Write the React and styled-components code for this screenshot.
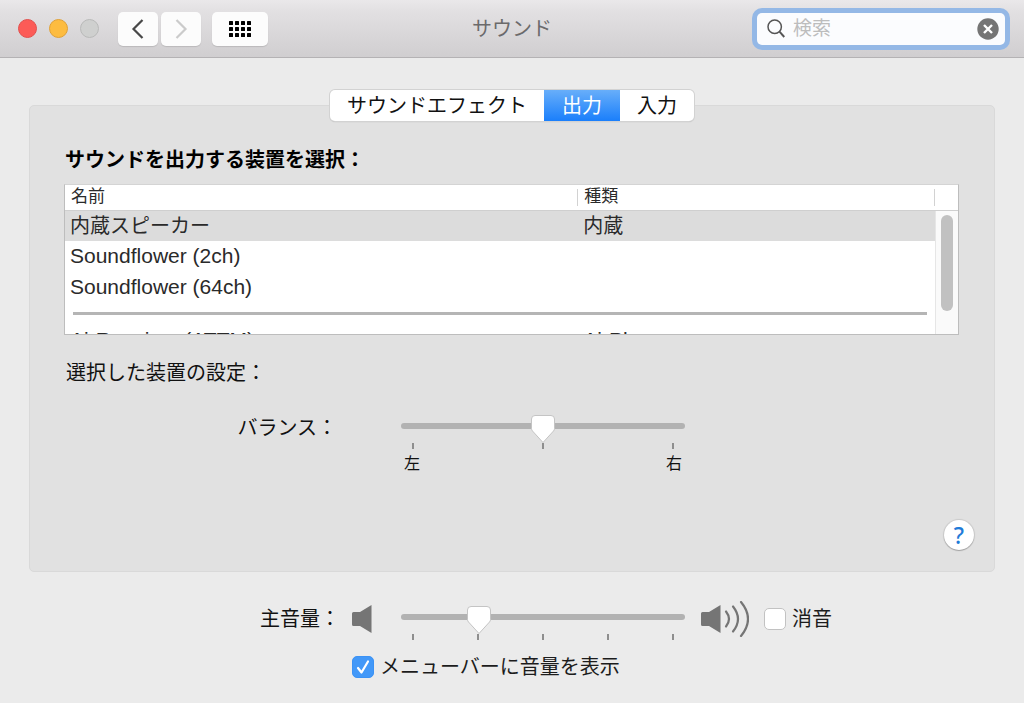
import React, { useState } from "react";
import styled, { createGlobalStyle } from "styled-components";

const GlobalStyle = createGlobalStyle`
  * {
    box-sizing: border-box;
  }
  body {
    margin: 0;
    background: #ebebeb;
    color: #111;
    font-family: "Liberation Sans", "Noto Sans CJK JP", sans-serif;
    font-size: 20px;
    line-height: 30px;
  }
  button,
  input {
    font: inherit;
    color: inherit;
    margin: 0;
    padding: 0;
    border: 0;
    outline: none;
  }
`;

const StyledTitleBar = styled.header`
  display: grid;
  grid-template-columns: 1fr auto 1fr;
  align-items: center;
  height: 58px;
  padding: 0 18px;
  background: linear-gradient(#eae8ea, #e2e0e2 20%, #d0ced0);
  border-bottom: 1px solid #b4b2b4;
`;
const StyledTitle = styled.h1`
  margin: 0;
  font-size: 20px;
  font-weight: 400;
  color: #6b6a6b;
`;
const StyledControls = styled.div`
  display: flex;
  align-items: center;
  gap: 11px;
`;
const StyledLights = styled.div`
  display: flex;
  gap: 12px;
  margin-right: 8px;
`;
const StyledLight = styled.button`
  width: 19px;
  height: 19px;
  border-radius: 50%;
  background: ${(props) => props.$color};
  border: 1px solid ${(props) => props.$edge};
`;
const StyledNav = styled.div`
  display: flex;
  gap: 3px;
`;
const StyledToolButton = styled.button`
  display: flex;
  align-items: center;
  justify-content: center;
  width: ${(props) => (props.$wide ? 56 : 40)}px;
  height: 34px;
  border-radius: 5px;
  background: #fcfcfc;
  box-shadow: 0 1px 1px rgba(0, 0, 0, 0.12);
`;
const StyledSearch = styled.label`
  justify-self: end;
  display: flex;
  align-items: center;
  gap: 8px;
  width: 248px;
  height: 32px;
  margin-right: 1px;
  padding: 0 6px 0 10px;
  border-radius: 5px;
  background: #fbfcfe;
  box-shadow: 0 0 0 5px #94b8e6;
`;
const StyledSearchInput = styled.input`
  flex: 1;
  min-width: 0;
  background: none;
  font-size: 19px;

  &::placeholder {
    color: #bdbdbd;
    opacity: 1;
  }
`;
const StyledClear = styled.button`
  display: flex;
  background: none;
`;

const StyledMain = styled.main`
  padding: 32px 29px 20px;
`;
const StyledTabs = styled.div`
  position: relative;
  display: flex;
  width: fit-content;
  margin: 0 auto -16px;
  border-radius: 5px;
  background: #fff;
  box-shadow: 0 0 0 1px #d2d2d2, 0 1px 1px rgba(0, 0, 0, 0.25);
`;
const StyledTab = styled.button`
  height: 31px;
  padding: 0 ${(props) => (props.$active ? 18 : 17)}px;
  line-height: 30px;
  border-radius: 5px;
  background: none;
  ${(props) =>
    props.$active &&
    "border-radius: 0; color: #fff; background: linear-gradient(#68aefa, #1a7ffb);"}
`;
const StyledPanel = styled.section`
  border: 1px solid #d9d9d9;
  border-radius: 5px;
  background: #e1e1e1;
  padding-bottom: 21px;
`;
const StyledDevices = styled.div`
  padding: 39px 35px 0 34px;
`;
const StyledHeading = styled.h2`
  margin: 0 0 9px;
  padding-left: 1px;
  font-size: 20px;
  font-weight: 700;
  color: #000;
`;
const StyledSubheading = styled.h3`
  margin: 23px 0 0;
  padding-left: 2px;
  font-size: 20px;
  font-weight: 400;
`;

const StyledTableBox = styled.div`
  display: grid;
  grid-template-columns: 1fr 23px;
  height: 151px;
  overflow: hidden;
  border: 1px solid #bdbdbd;
  border-top-color: #d4d4d4;
  background: #fff;
`;
const StyledTable = styled.table`
  width: 100%;
  border-collapse: collapse;
  table-layout: fixed;
  color: #2a2a2a;
`;
const StyledTh = styled.th`
  position: relative;
  width: ${(props) => props.$width};
  height: 25px;
  padding: 0 6px;
  border-bottom: 1px solid #cfcfcf;
  font-size: 17px;
  font-weight: 400;
  line-height: 24px;
  text-align: left;

  &::after {
    content: "";
    position: absolute;
    top: 4px;
    right: 0;
    width: 1px;
    height: 17px;
    background: #d2d2d2;
  }
`;
const StyledRow = styled.tr`
  background: ${(props) => (props.$selected ? "#dcdcdc" : "#fff")};
`;
const StyledTd = styled.td`
  height: ${(props) => (props.$tall ? 31 : 30)}px;
  padding: 0 5px;
  line-height: 30px;
  font-size: ${(props) => (props.$tall ? 21 : 20)}px;
`;
const StyledDividerCell = styled.td`
  height: 22px;
  padding: 0 8px;
`;
const StyledDivider = styled.hr`
  height: 3px;
  margin: 0;
  border: 0;
  background: #b5b5b5;
`;
const StyledScroll = styled.div`
  border-left: 1px solid #e6e6e6;
  background: #fafafa;
`;
const StyledScrollHead = styled.div`
  height: 26px;
  margin-left: -1px;
  border-bottom: 1px solid #cfcfcf;
  background: #fff;
`;
const StyledScrollThumb = styled.div`
  width: 12px;
  height: 96px;
  margin: 4px auto 0;
  border-radius: 6px;
  background: #c1c1c1;
`;

const StyledSliderRow = styled.div`
  display: grid;
  grid-template-columns: 6fr 284px 5fr;
  margin: ${(props) => (props.$inPanel ? "25px -1px 0" : "32px 0 0")};
`;
const StyledLead = styled.div`
  display: flex;
  justify-content: flex-end;
  align-items: center;
  height: 30px;
  gap: 12px;
  padding-right: ${(props) => (props.$icon ? 29 : 64)}px;
`;
const StyledTail = styled.div`
  display: flex;
  align-items: center;
  height: 30px;
  gap: 15px;
  padding-left: 16px;
`;

const thumb = encodeURIComponent(
  "<svg xmlns='http://www.w3.org/2000/svg' width='26' height='30'><path d='M5 1.500h16q3.500 0 3.500 3.500v9.500q0 1.500-1 2.500L13 28.500 2.500 17q-1-1-1-2.500V5q0-3.500 3.500-3.500z' fill='white' stroke='#c4c4c4'/></svg>"
);
const StyledRange = styled.input`
  display: block;
  width: 100%;
  height: 30px;
  padding-bottom: 4px;
  appearance: none;
  background: none;

  &::-webkit-slider-runnable-track {
    height: 6px;
    border-radius: 3px;
    background: #b2b2b2;
  }
  &::-webkit-slider-thumb {
    appearance: none;
    width: 26px;
    height: 30px;
    margin-top: -9px;
    background: url("data:image/svg+xml,${thumb}") no-repeat;
  }
`;
const StyledTicks = styled.div`
  display: flex;
  justify-content: space-between;
  padding: 0 11px;
`;
const StyledTick = styled.span`
  width: 2px;
  height: 6px;
  background: #8e8e8e;
`;
const StyledEnds = styled.div`
  display: flex;
  justify-content: space-between;
  padding: 0 3px;
  font-size: 16px;
  line-height: 30px;
`;

const StyledHelpRow = styled.div`
  display: flex;
  justify-content: flex-end;
  margin-top: 41px;
  padding-right: 20px;
`;
const StyledHelp = styled.button`
  width: 30px;
  height: 30px;
  border-radius: 50%;
  background: #fff;
  color: #1f7bd8;
  font-family: "Noto Sans", sans-serif;
  font-size: 23px;
  font-weight: 500;
  box-shadow: 0 0 1px 1px rgba(0, 0, 0, 0.1), 0 1px 1px rgba(0, 0, 0, 0.2);
`;

const StyledCheck = styled.label`
  display: flex;
  align-items: center;
  gap: 6px;
  color: #1c1c1c;
`;
const StyledCheckbox = styled.input`
  appearance: none;
  display: grid;
  place-items: center;
  width: 22px;
  height: 22px;
  border-radius: 5px;
  border: 1px solid #c2c2c2;
  background: #fff;

  &:checked {
    border-color: #3b92f5;
    background: #4298f8;
  }
  &:checked::before {
    content: "";
    width: 16px;
    height: 16px;
    background: url("data:image/svg+xml,${encodeURIComponent(
      "<svg xmlns='http://www.w3.org/2000/svg' viewBox='0 0 16 16'><path d='M3 9l3.500 4.500L13 2.500' fill='none' stroke='white' stroke-width='2.200' stroke-linecap='round' stroke-linejoin='round'/></svg>"
    )}");
  }
`;
const StyledMenuBarRow = styled.div`
  display: grid;
  grid-template-columns: 6fr 284px 5fr;
  margin-top: 12px;
`;
const StyledMenuBarCheck = styled(StyledCheck)`
  grid-column: 2 / 4;
  margin-left: -49px;
`;

const Chevron = ({ d, color }) => (
  <svg width="14" height="22" viewBox="0 0 14 22">
    <path d={d} fill="none" stroke={color} strokeWidth="2.2" />
  </svg>
);

const GridIcon = () => (
  <svg width="22" height="16" viewBox="0 0 22 16">
    {[0, 6, 12].map((y) =>
      [0, 6, 12, 18].map((x) => (
        <rect key={`${x}-${y}`} x={x} y={y} width="4" height="4" rx="0.5" />
      ))
    )}
  </svg>
);

const SearchIcon = () => (
  <svg width="18" height="19" viewBox="0 0 18 19">
    <g fill="none" stroke="#555" strokeWidth="1.5">
      <circle cx="7.7" cy="7.7" r="6.7" />
      <path d="M12.5 12.7L17.3 18" strokeWidth="2" />
    </g>
  </svg>
);

const ClearIcon = () => (
  <svg width="22" height="22" viewBox="0 0 22 22">
    <circle cx="11" cy="11" r="10.7" fill="#757575" />
    <path d="M7 7l8 8M15 7l-8 8" stroke="#fff" strokeWidth="2.4" />
  </svg>
);

const Speaker = ({ waves }) => (
  <svg width={waves ? 48 : 20} height="36" viewBox={`0 0 ${waves ? 48 : 20} 36`}>
    <path
      d="M1.5 11H8L19.5 4V32L8 25H1.5Q0 25 0 23.5V12.5Q0 11 1.5 11Z"
      fill="#757575"
    />
    {waves && (
      <g fill="none" stroke="#757575" strokeWidth="2.2" strokeLinecap="round">
        <path d="M25 10.500Q31 18 25 25.500" />
        <path d="M32 5.500Q42 18 32 30.500" />
        <path d="M40 1Q54 18 40 35" />
      </g>
    )}
  </svg>
);

const Slider = ({ id, value, onChange, ticks, ends }) => (
  <div>
    <StyledRange
      id={id}
      type="range"
      value={value}
      onChange={(e) => onChange(Number(e.target.value))}
    />
    <StyledTicks>
      {Array.from({ length: ticks }, (_, i) => (
        <StyledTick key={i} />
      ))}
    </StyledTicks>
    {ends && (
      <StyledEnds>
        {ends.map((e) => (
          <span key={e}>{e}</span>
        ))}
      </StyledEnds>
    )}
  </div>
);

const tabs = ["サウンドエフェクト", "出力", "入力"];
const devices = [
  { name: "内蔵スピーカー", type: "内蔵" },
  { name: "Soundflower (2ch)", type: "" },
  { name: "Soundflower (64ch)", type: "" },
];

const App = () => {
  const [tab, setTab] = useState("出力");
  const [selected, setSelected] = useState(0);
  const [search, setSearch] = useState("");
  const [balance, setBalance] = useState(50);
  const [volume, setVolume] = useState(25);
  const [mute, setMute] = useState(false);
  const [menuBar, setMenuBar] = useState(true);

  return (
    <>
      <GlobalStyle />
      <StyledTitleBar>
        <StyledControls>
          <StyledLights>
            <StyledLight $color="#fc5b57" $edge="#e2504d" aria-label="閉じる" />
            <StyledLight $color="#fdbc40" $edge="#e0a136" aria-label="しまう" />
            <StyledLight $color="#cfd0cf" $edge="#b9bab9" aria-label="拡大" />
          </StyledLights>
          <StyledNav>
            <StyledToolButton aria-label="戻る">
              <Chevron d="M11.5 2L2.5 11L11.5 20" color="#484848" />
            </StyledToolButton>
            <StyledToolButton aria-label="進む">
              <Chevron d="M2.5 2L11.5 11L2.5 20" color="#cbcbcb" />
            </StyledToolButton>
          </StyledNav>
          <StyledToolButton $wide aria-label="すべてを表示">
            <GridIcon />
          </StyledToolButton>
        </StyledControls>
        <StyledTitle>サウンド</StyledTitle>
        <StyledSearch>
          <SearchIcon />
          <StyledSearchInput
            value={search}
            onChange={(e) => setSearch(e.target.value)}
            placeholder="検索"
            aria-label="検索"
          />
          <StyledClear onClick={() => setSearch("")} aria-label="消去">
            <ClearIcon />
          </StyledClear>
        </StyledSearch>
      </StyledTitleBar>

      <StyledMain>
        <StyledTabs>
          {tabs.map((e) => (
            <StyledTab key={e} $active={e === tab} onClick={() => setTab(e)}>
              {e}
            </StyledTab>
          ))}
        </StyledTabs>
        <StyledPanel>
          <StyledDevices>
            <StyledHeading>サウンドを出力する装置を選択：</StyledHeading>
            <StyledTableBox>
              <StyledTable>
                <thead>
                  <tr>
                    <StyledTh $width="59%">名前</StyledTh>
                    <StyledTh>種類</StyledTh>
                  </tr>
                </thead>
                <tbody>
                  {devices.map((e, i) => (
                    <StyledRow
                      key={e.name}
                      $selected={i === selected}
                      onClick={() => setSelected(i)}
                    >
                      <StyledTd $tall={i > 0}>{e.name}</StyledTd>
                      <StyledTd $tall={i > 0}>{e.type}</StyledTd>
                    </StyledRow>
                  ))}
                  <tr>
                    <StyledDividerCell colSpan={2}>
                      <StyledDivider />
                    </StyledDividerCell>
                  </tr>
                  <StyledRow>
                    <StyledTd $tall>AirReceiver (ATTM)</StyledTd>
                    <StyledTd $tall>AirPlay</StyledTd>
                  </StyledRow>
                </tbody>
              </StyledTable>
              <StyledScroll>
                <StyledScrollHead />
                <StyledScrollThumb />
              </StyledScroll>
            </StyledTableBox>
            <StyledSubheading>選択した装置の設定：</StyledSubheading>
          </StyledDevices>
          <StyledSliderRow $inPanel>
            <StyledLead>
              <label htmlFor="balance">バランス：</label>
            </StyledLead>
            <Slider
              id="balance"
              value={balance}
              onChange={setBalance}
              ticks={3}
              ends={["左", "右"]}
            />
          </StyledSliderRow>
          <StyledHelpRow>
            <StyledHelp aria-label="ヘルプ">?</StyledHelp>
          </StyledHelpRow>
        </StyledPanel>

        <StyledSliderRow>
          <StyledLead $icon>
            <label htmlFor="volume">主音量：</label>
            <Speaker />
          </StyledLead>
          <Slider id="volume" value={volume} onChange={setVolume} ticks={5} />
          <StyledTail>
            <Speaker waves />
            <StyledCheck>
              <StyledCheckbox
                type="checkbox"
                checked={mute}
                onChange={(e) => setMute(e.target.checked)}
              />
              消音
            </StyledCheck>
          </StyledTail>
        </StyledSliderRow>
        <StyledMenuBarRow>
          <StyledMenuBarCheck>
            <StyledCheckbox
              type="checkbox"
              checked={menuBar}
              onChange={(e) => setMenuBar(e.target.checked)}
            />
            メニューバーに音量を表示
          </StyledMenuBarCheck>
        </StyledMenuBarRow>
      </StyledMain>
    </>
  );
};

export default App;
